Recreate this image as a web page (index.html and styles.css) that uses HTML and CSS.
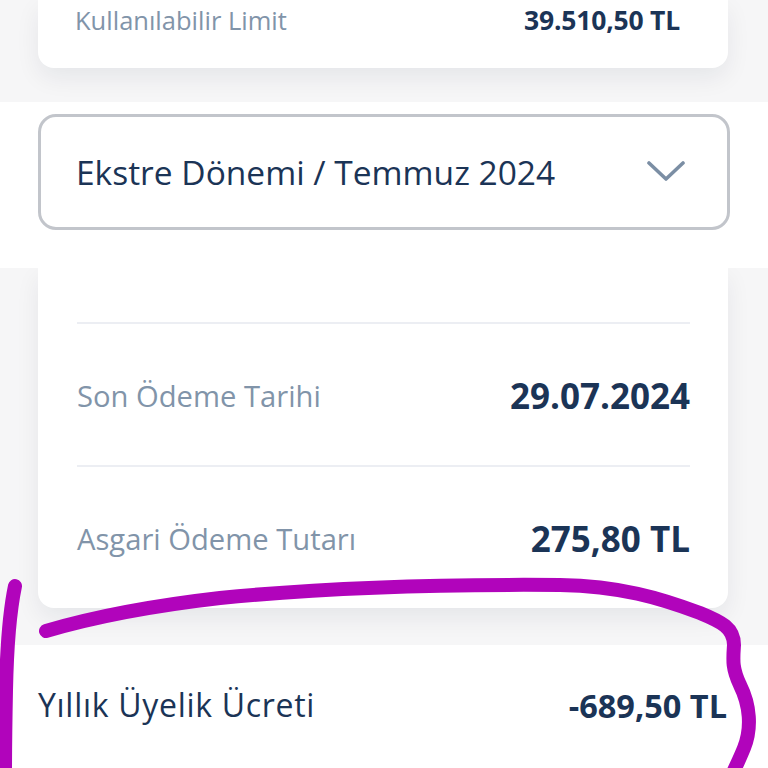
FILE: index.html
```html
<!DOCTYPE html>
<html lang="tr">
<head>
<meta charset="utf-8">
<link rel="stylesheet" href="styles.css">
</head>
<body>
<div class="page">
  <div class="card card-top">
    <div class="row row-limit">
      <span class="label">Kullanılabilir Limit</span>
      <span class="value value-sm">39.510,50 TL</span>
    </div>
  </div>

  <div class="sticky">
    <div class="select">
      <span class="select-text">Ekstre Dönemi / Temmuz 2024</span>
      <svg class="chevron" width="38" height="22" viewBox="0 0 38 22"><polyline points="2,3 19,19 36,3" fill="none" stroke="#7b8ea4" stroke-width="3.6" stroke-linecap="round" stroke-linejoin="round"/></svg>
    </div>
  </div>

  <div class="card card-list">
    <div class="spacer"></div>
    <div class="divider"></div>
    <div class="row row-big">
      <span class="label label-lg">Son Ödeme Tarihi</span>
      <span class="value value-lg">29.07.2024</span>
    </div>
    <div class="divider"></div>
    <div class="row row-big">
      <span class="label label-lg">Asgari Ödeme Tutarı</span>
      <span class="value value-lg">275,80 TL</span>
    </div>
  </div>

  <div class="fee">
    <span class="fee-label">Yıllık Üyelik Ücreti</span>
    <span class="value value-fee">-689,50 TL</span>
  </div>

  <svg class="scribble" width="768" height="768" viewBox="0 0 768 768">
    <path d="M15 586 C 10 610, 7 640, 6 690 S 5 750, 5 775" fill="none" stroke="#b104bb" stroke-width="14" stroke-linecap="round"/>
    <path d="M46 631 C 90 618, 150 606, 220 598 C 320 588, 430 584, 560 585 C 620 586, 660 598, 700 613 C 722 622, 734 628, 734 645 C 733 660, 732 668, 740 685 C 750 705, 752 728, 744 748 C 740 758, 736 766, 732 775" fill="none" stroke="#b104bb" stroke-width="14" stroke-linecap="round" stroke-linejoin="round"/>
  </svg>
</div>
</body>
</html>
```
FILE: styles.css
```css
* { box-sizing: border-box; }
html, body { margin: 0; padding: 0; }
body {
  background: #f6f6f7;
  font-family: "Open Sans", "Noto Sans", sans-serif;
  width: 768px;
  height: 768px;
  overflow: hidden;
}
.page {
  position: relative;
  width: 768px;
  height: 768px;
  display: flex;
  flex-direction: column;
}
.card {
  background: #ffffff;
  margin: 0 40px 0 38px;
  box-shadow: 0 10px 24px rgba(20, 30, 50, 0.07);
}
.card-top {
  border-radius: 0 0 16px 16px;
  padding: 0 48px 28px 37px;
  height: 68px;
}
.row {
  display: flex;
  align-items: center;
  justify-content: space-between;
}
.row-limit { height: 40px; }
.label {
  color: #8194a9;
  font-size: 25.5px;
  font-weight: 400;
}
.value {
  color: #1b3456;
  font-weight: 700;
}
.value-sm { font-size: 26.5px; letter-spacing: -0.2px; }
.sticky {
  position: relative;
  z-index: 2;
  background: #ffffff;
  margin-top: 34px;
  padding: 12px 38px 38px 38px;
}
.select {
  height: 116px;
  border: 3px solid #c2c5cb;
  border-radius: 18px;
  display: flex;
  align-items: center;
  justify-content: space-between;
  padding: 0 42px 0 35px;
  background: #fff;
}
.select-text {
  color: #1b3456;
  font-size: 33.5px;
  font-weight: 500;
}
.chevron { display: block; margin-top: -2px; }
.card-list {
  border-radius: 0 0 16px 16px;
  padding: 0 38px 0 39px;
}
.spacer { height: 54px; }
.divider {
  height: 2px;
  background: #eceef3;
}
.row-big { height: 141px; padding-top: 2px; }
.label-lg { font-size: 29.2px; }
.value-lg { font-size: 35px; }
.fee {
  margin-top: 37px;
  flex: 1;
  background: #ffffff;
  display: flex;
  justify-content: space-between;
  align-items: flex-start;
  padding: 38px 41px 0 38px;
}
.fee-label {
  color: #1b3456;
  font-size: 32px;
  font-weight: 400;
  letter-spacing: 0.7px;
}
.value-fee { font-size: 32.5px; }
.scribble {
  position: absolute;
  left: 0;
  top: 0;
  z-index: 5;
  pointer-events: none;
}
```
